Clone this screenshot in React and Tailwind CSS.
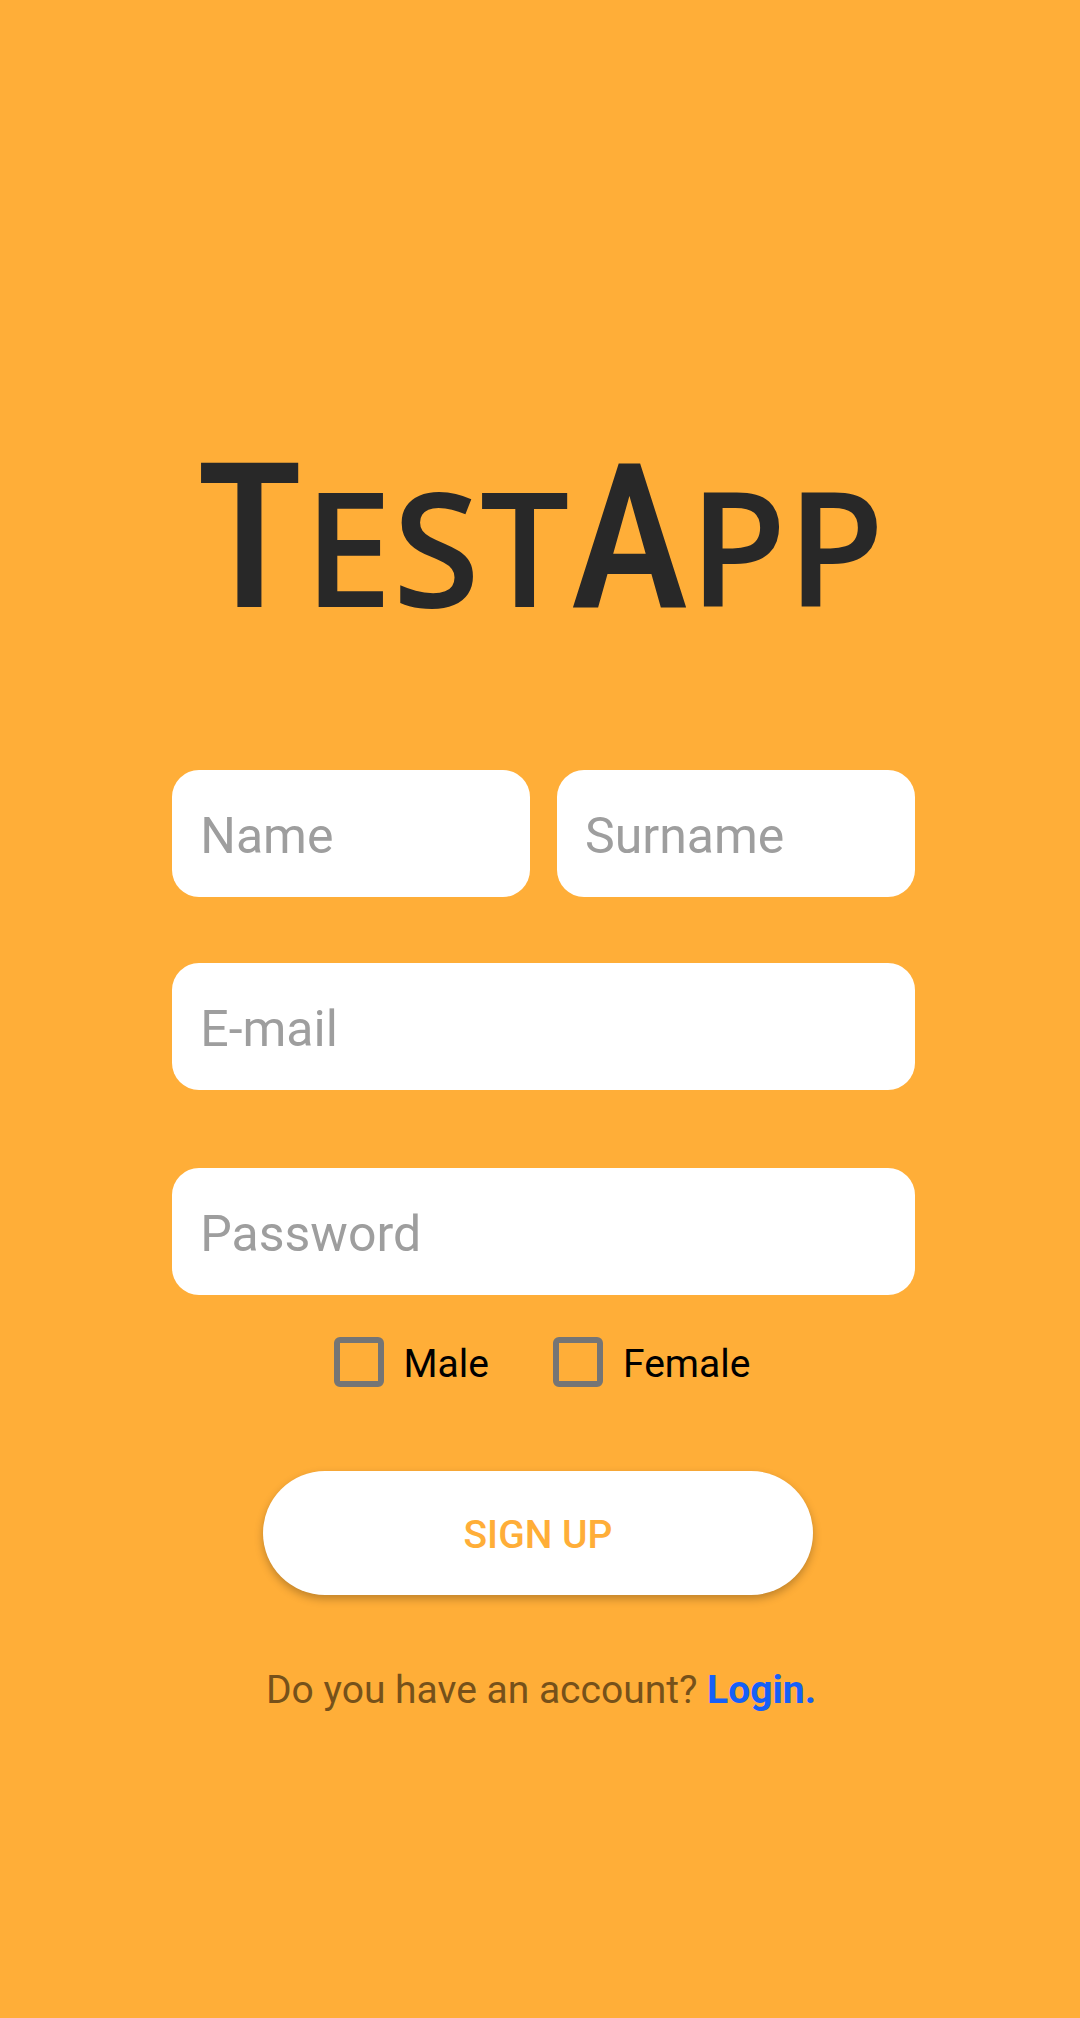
const field = "h-[127px] min-w-0 w-full rounded-[27px] bg-white px-[28px] pt-1 text-[50px] text-gray-800 placeholder:text-[#9e9e9e] placeholder:opacity-100 outline-none";
const large = "font-['Roboto_Condensed',sans-serif] font-medium text-[203px]";
const small = "font-['Open_Sans',sans-serif] font-semibold text-[159px]";

function Choice({ id, label }) {
  return (
    <label htmlFor={id} className="flex items-center gap-5 text-[39px] leading-[50px] text-black">
      <input id={id} type="checkbox" className="size-[50px] appearance-none rounded-[6px] border-[6px] border-[#757575] checked:bg-[#757575]" />
      <span className="pt-1">{label}</span>
    </label>
  );
}

export default function App() {
  return (
    <main className="flex min-h-screen flex-col items-center bg-[#ffae38] pt-[428px] font-['Roboto',sans-serif]">
      <h1 className="h-[220px] leading-[220px] text-[#282828] whitespace-nowrap">
        <span className={large}>T</span>
        <span className={small}>EST</span>
        <span className={large}>A</span>
        <span className={small}>PP</span>
      </h1>
      <form className="flex w-full flex-col items-center pt-[122px]" onSubmit={(e) => e.preventDefault()}>
        <div className="flex w-[69.4%] flex-col pl-[7px]">
          <div className="grid grid-cols-2 gap-[27px]">
            <input aria-label="Name" placeholder="Name" className={field} />
            <input aria-label="Surname" placeholder="Surname" className={field} />
          </div>
          <input aria-label="E-mail" type="email" placeholder="E-mail" className={`${field} mt-[66px]`} />
          <input aria-label="Password" type="password" placeholder="Password" className={`${field} mt-[78px]`} />
        </div>
        <div className="mt-[40px] flex gap-[64px] pl-1">
          <Choice id="male" label="Male" />
          <Choice id="female" label="Female" />
        </div>
        <div className="mt-[82px] flex w-full justify-center pr-1">
          <button className="h-[124px] w-[550px] rounded-full bg-white pt-1 text-[39px] font-medium text-[#ffae38] shadow-[0_4px_8px_rgba(0,0,0,0.25)]">SIGN UP</button>
        </div>
      </form>
      <p className="mt-[70px] pl-[2px] text-[39px] leading-[50px] text-[#76511a]">
        Do you have an account? <a href="#login" className="font-bold text-[#1560f8]">Login.</a>
      </p>
    </main>
  );
}
